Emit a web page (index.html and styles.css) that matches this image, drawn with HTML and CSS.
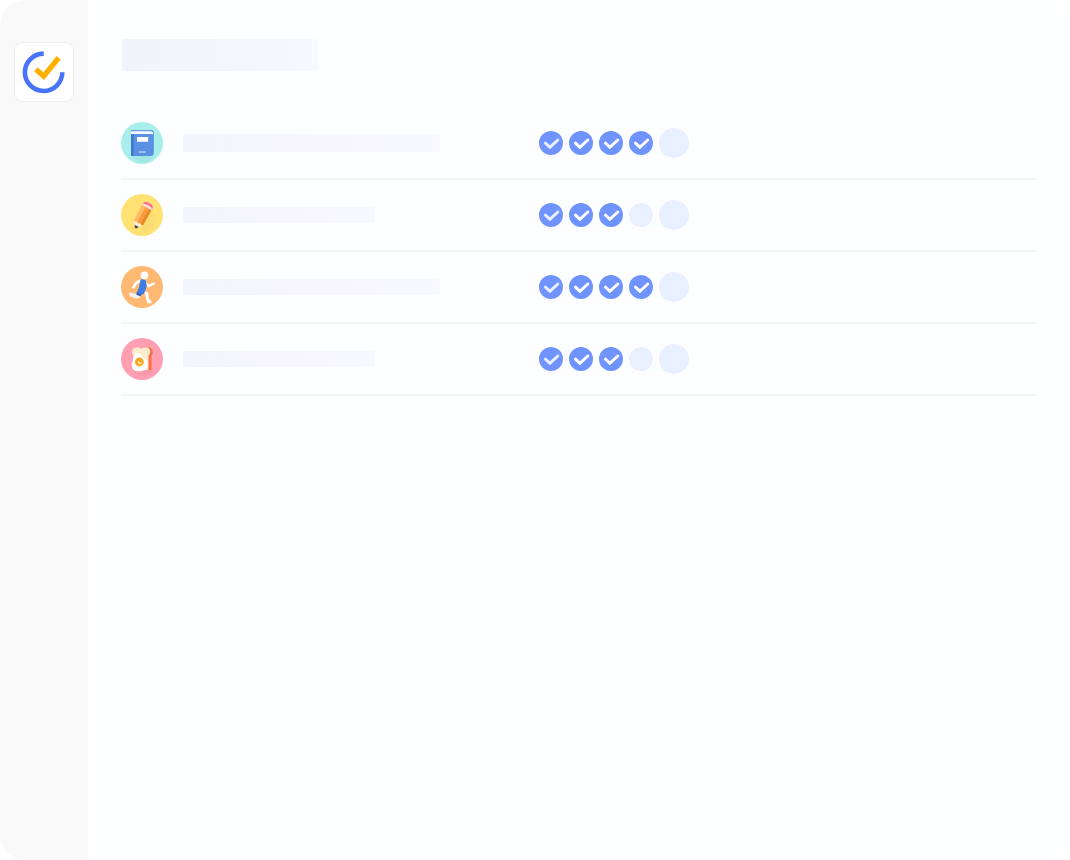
FILE: index.html
```html
<!DOCTYPE html>
<html lang="en">
<head>
<meta charset="utf-8">
<meta name="viewport" content="width=device-width, initial-scale=1">
<title>Habits</title>
<link rel="stylesheet" href="styles.css">
</head>
<body>
<svg class="defs" width="0" height="0" aria-hidden="true">
  <symbol id="tick" viewBox="0 0 24 24">
    <path d="M6.5 12.2l4.4 4.1 7.9-7.3" fill="none" stroke="#fff" stroke-width="3" stroke-linecap="round" stroke-linejoin="miter"/>
  </symbol>
</svg>
<div class="window">
  <aside class="sidebar">
    <div class="logo">
      <svg viewBox="0 0 60 60" role="img" aria-label="Logo">
        <path d="M29.7 11.6A18.7 18.7 0 1 0 48.3 30.3" fill="none" stroke="#4772fa" stroke-width="4.6"/>
        <path d="M21.9 27.4l7.8 6.7 15-18.3" fill="none" stroke="#ffb000" stroke-width="5.4"/>
      </svg>
    </div>
  </aside>
  <main class="content">
    <div class="title-bar"></div>
    <ul class="habits">
      <li class="habit">
        <svg class="icon" viewBox="0 0 42 42" aria-hidden="true">
          <circle cx="21" cy="21" r="21" fill="#a8efec"/>
          <path d="M11 33.5h21v2q-3 3.5-8 5-8-1-13-7z" fill="#9fe6e4"/>
          <path d="M10 8h19.5q3.4 0 3.4 3v20q0 3-3.4 3H10z" fill="#5b91e3"/>
          <path d="M10 8h19.5q2.8 0 3.4 2.8H10z" fill="#6c9ce0"/>
          <path d="M10 9.3h19.4q2.6 0 3 3.2l-1.2-.4H10z" fill="#f4f9ff"/>
          <path d="M10 12h2.6V34H10z" fill="#4379cd"/>
          <path d="M16 14.9h11.2v4.8H16z" fill="#fff"/>
          <path d="M18 29.2h7v1.6h-7z" fill="#b3cff5"/>
        </svg>
        <span class="name name-long name-tall"></span>
        <div class="days">
          <label class="day"><input type="checkbox" aria-label="Day 1" checked><svg class="faded"><use href="#tick"/></svg></label>
          <label class="day"><input type="checkbox" aria-label="Day 2" checked><svg><use href="#tick"/></svg></label>
          <label class="day"><input type="checkbox" aria-label="Day 3" checked><svg><use href="#tick"/></svg></label>
          <label class="day"><input type="checkbox" aria-label="Day 4" checked><svg><use href="#tick"/></svg></label>
          <label class="day today"><input type="checkbox" aria-label="Today"><svg><use href="#tick"/></svg></label>
        </div>
      </li>
      <li class="habit">
        <svg class="icon" viewBox="0 0 42 42" aria-hidden="true">
          <circle cx="21" cy="21" r="21" fill="#ffe174"/>
          <path d="M31 15L19 34l6 5q7-3 10-10 0-6-4-14z" fill="#fbde73"/>
          <g transform="translate(21.6 21.3) rotate(29) scale(1.06 1)">
            <path d="M-5-10.5q0-3.5 5-3.5t5 3.5v2H-5z" fill="#fb6f95"/>
            <path d="M-5-10.2q5-2.4 10 0v2.2H-5z" fill="#fde5d5"/>
            <path d="M-5 8H5L1 14.5h-2z" fill="#fff0dc"/>
            <path d="M-5-8.5q2-1.2 3.5 0V8.5q-2 1-3.5 0z" fill="#ffb967"/>
            <path d="M-1.5-8.5q1.7-1 3.5 0V8.5q-1.8 1-3.5 0z" fill="#f99b3f"/>
            <path d="M2-8.5q1.5-1 3 0V8.5q-1.5 1-3 0z" fill="#e98727"/>
            <path d="M-2.2 12h4.4L.8 14.7h-1.6z" fill="#4b4545"/>
          </g>
        </svg>
        <span class="name name-short"></span>
        <div class="days">
          <label class="day"><input type="checkbox" aria-label="Day 1" checked><svg class="faded"><use href="#tick"/></svg></label>
          <label class="day"><input type="checkbox" aria-label="Day 2" checked><svg><use href="#tick"/></svg></label>
          <label class="day"><input type="checkbox" aria-label="Day 3" checked><svg><use href="#tick"/></svg></label>
          <label class="day"><input type="checkbox" aria-label="Day 4"><svg><use href="#tick"/></svg></label>
          <label class="day today"><input type="checkbox" aria-label="Today"><svg><use href="#tick"/></svg></label>
        </div>
      </li>
      <li class="habit">
        <svg class="icon" viewBox="0 0 42 42" aria-hidden="true">
          <circle cx="21" cy="21" r="21" fill="#ffb972"/>
          <g fill="none" stroke="#fff" stroke-linecap="round" stroke-linejoin="round">
            <path d="M19 14.8l-3.8 2.2-2.8 4.2" stroke-width="2.8"/>
            <path d="M24.5 17l2.6 3 5.4-2.2" stroke-width="2.5"/>
            <path d="M23 26.3l2.6 1 .8 5 1.2 3.6 1.6-.2" stroke-width="3"/>
          </g>
          <path d="M15.6 27.5l4 2q-.6 2.6-3.6 3.2-3-.4-5.6-2.2l-1.2.8-1.4-3.8 2-.9 5 1.4z" fill="#f1f0f2"/>
          <path d="M19.6 13.2q2.6-.4 5.2 1.4l1 5-1 4-2 4.6-7.2-1.4 2.4-5.2z" fill="#3f7ce3"/>
          <path d="M15.6 26.4l5.6 1.6-2 2.2-3.8-1.4z" fill="#2f61c8"/>
          <circle cx="23.5" cy="9.4" r="3.8" fill="#fff"/>
        </svg>
        <span class="name name-long"></span>
        <div class="days">
          <label class="day"><input type="checkbox" aria-label="Day 1" checked><svg class="faded"><use href="#tick"/></svg></label>
          <label class="day"><input type="checkbox" aria-label="Day 2" checked><svg><use href="#tick"/></svg></label>
          <label class="day"><input type="checkbox" aria-label="Day 3" checked><svg><use href="#tick"/></svg></label>
          <label class="day"><input type="checkbox" aria-label="Day 4" checked><svg><use href="#tick"/></svg></label>
          <label class="day today"><input type="checkbox" aria-label="Today"><svg><use href="#tick"/></svg></label>
        </div>
      </li>
      <li class="habit">
        <svg class="icon" viewBox="0 0 42 42" aria-hidden="true">
          <circle cx="21" cy="21" r="21" fill="#ff9fb1"/>
          <path d="M12 32h19v3q-5 3-9 3.5-7-1-10-6.500z" fill="#f99aac"/>
          <path d="M23 9.200q8-1 8.800 4.400.2 2.600-1.300 4V31q0 1-1.200 1H23z" fill="#fb7043"/>
          <path d="M12.500 18q-2.400-2.600-1.300-5.700 1.600-3.200 5.500-3 1.700.3 3.500 1.500 2-1.600 4.500-1.500 4.200.2 4.600 4.200 0 2.700-1.800 4.200V31q0 1-1 1H13.500q-1 0-1-1z" fill="#ffebcd"/>
          <path d="M15.600 15.200q3.600-.6 5 2.400 1 2 3.800 3.600 2.900 2.200 2.400 6.200-1 4-4 5-3.400 1.200-7 .8-4.400-.8-5-4.800-.4-2.400.6-4.800.7-1.600.6-3.600.400-4 3.600-4.800z" fill="#fff"/>
          <circle cx="18.400" cy="24" r="4.400" fill="#f5a71d"/>
          <path d="M18 22.200a2.200 2.200 0 1 0 3.200 2.400 2.400 2.400 0 0 1-3.200-2.400z" fill="#ffe18a"/>
        </svg>
        <span class="name name-short"></span>
        <div class="days">
          <label class="day"><input type="checkbox" aria-label="Day 1" checked><svg class="faded"><use href="#tick"/></svg></label>
          <label class="day"><input type="checkbox" aria-label="Day 2" checked><svg><use href="#tick"/></svg></label>
          <label class="day"><input type="checkbox" aria-label="Day 3" checked><svg><use href="#tick"/></svg></label>
          <label class="day"><input type="checkbox" aria-label="Day 4"><svg><use href="#tick"/></svg></label>
          <label class="day today"><input type="checkbox" aria-label="Today"><svg><use href="#tick"/></svg></label>
        </div>
      </li>
    </ul>
  </main>
</div>
</body>
</html>
```
FILE: styles.css
```css
* {
  box-sizing: border-box;
}

body {
  margin: 0;
  background: #fff;
  font-family: "Liberation Sans", sans-serif;
}

.defs {
  position: absolute;
}

.window {
  display: flex;
  min-height: 100vh;
  overflow: hidden;
  border-radius: 26px;
  background: #fdfeff;
}

.sidebar {
  flex: none;
  width: 88px;
  padding: 42px 14px;
  background: #f9f9f9;
}

.logo {
  width: 60px;
  height: 60px;
  border-radius: 9px;
  background: #fff;
  box-shadow: inset 0 0 0 1px #eee;
}

.logo svg {
  display: block;
  width: 100%;
  height: 100%;
}

.content {
  flex: 1;
  min-width: 0;
  padding: 39px 34px 39px 33px;
}

.title-bar {
  width: 196px;
  height: 32px;
  margin: 0 0 37px 1px;
  border-radius: 3px;
  background: linear-gradient(90deg, #f3f3fc, #f4f4fc 40%, #f5f6fb 55%, #f8f9fe);
}

.habits {
  margin: 0;
  padding: 0;
  list-style: none;
}

.habit {
  display: grid;
  grid-template-columns: 42px 336px auto;
  justify-content: start;
  align-items: center;
  column-gap: 20px;
  height: 72px;
  border-bottom: 2px solid #f3f4f8;
}

.icon {
  width: 42px;
  height: 42px;
}

.name {
  height: 16px;
  border-radius: 3px;
  background: linear-gradient(90deg, #f3f4fd, #f6f6fc 40%, #f8f9fe);
}

.name-tall {
  height: 18px;
}

.name-long {
  width: 257px;
}

.name-short {
  width: 192px;
}

.days {
  display: flex;
  align-items: center;
  gap: 6px;
}

.day {
  display: grid;
  width: 24px;
  height: 24px;
}

.today {
  width: 30px;
  height: 30px;
}

.day input,
.day svg {
  grid-area: 1 / 1;
  width: 100%;
  height: 100%;
  margin: 0;
}

.day input {
  appearance: none;
  border-radius: 50%;
  background: #e9f0ff;
}

.day input:checked {
  background: #7094ff;
}

.day svg {
  visibility: hidden;
  pointer-events: none;
}

.day input:checked + svg {
  visibility: visible;
}

.day .faded {
  opacity: 0.85;
}
```
